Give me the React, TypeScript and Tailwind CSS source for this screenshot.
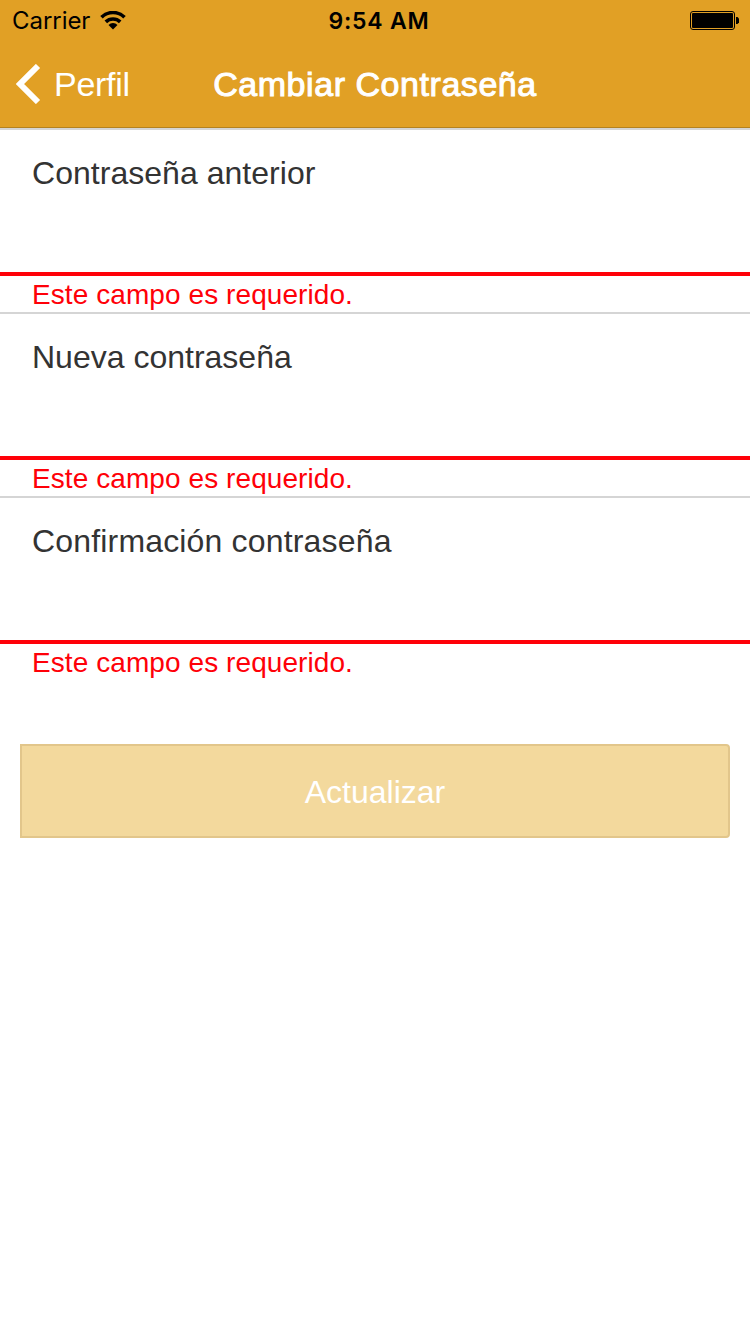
const fields = [
  { name: 'Contraseña anterior', tracking: 'tracking-[0.03px]' },
  { name: 'Nueva contraseña', tracking: 'tracking-normal' },
  { name: 'Confirmación contraseña', tracking: 'tracking-[0.17px]' },
];

export default function App() {
  return (
    <div className="flex h-[1334px] w-[750px] flex-col overflow-hidden bg-white font-['Liberation_Sans',Arial,sans-serif]">
      <header className="flex h-32 shrink-0 flex-col border-b border-[#b5821f] bg-[#e1a025] text-white">
        <div className="grid h-10 grid-cols-3 items-center pr-[11px] pl-3 font-['Inter',sans-serif] text-black">
          <div className="flex items-center gap-[10px] pt-0.5 text-[24px] leading-[38px] tracking-[-0.05px]">
            <span>Carrier</span>
            <svg className="-mt-0.5" width="26" height="19" viewBox="0 0 26 19" fill="none" stroke="currentColor" strokeWidth="3.6">
              <path d="M1.5 6.2a16.5 16.5 0 0 1 23 0" />
              <path d="M5.8 10.9a10.3 10.3 0 0 1 14.4 0" />
              <path d="M13 18.4l-4.5-4.4a6.2 6.2 0 0 1 9 0z" fill="currentColor" stroke="none" />
            </svg>
          </div>
          <div className="pt-0.5 pl-[7px] text-center text-[23px] leading-[38px] font-semibold tracking-[0.8px]">9:54 AM</div>
          <svg className="justify-self-end" width="49" height="20" viewBox="0 0 49 20">
            <rect x="0.5" y="1.5" width="44" height="18" rx="2.5" fill="none" stroke="black" />
            <rect x="2" y="3" width="41" height="15" rx="1" />
            <path d="M46 7h1.5l1.5 1.5v4L47.5 14H46z" />
          </svg>
        </div>
        <div className="grid flex-1 grid-cols-[1fr_auto_1fr] items-center">
          <div className="flex items-center gap-3 pl-4 text-[34px] tracking-[-0.3px]">
            <svg width="26" height="40" viewBox="0 0 26 40" fill="none" stroke="currentColor" strokeWidth="6">
              <path d="M22 2L4 20l18 18" />
            </svg>
            <span className="pt-0.5">Perfil</span>
          </div>
          <h1 className="pt-0.5 text-[34px] tracking-[0.55px] [-webkit-text-stroke:1px_white]">Cambiar Contraseña</h1>
          <div />
        </div>
      </header>
      <form className="flex flex-col">
        {fields.map(({ name, tracking }) => (
          <div key={name} className="flex h-[184px] flex-col border-t-2 border-[#d5d5d5]">
            <label
              className={`flex h-[146px] shrink-0 flex-col border-b-4 border-[#ff0008] pt-[23px] pl-8 text-[32px] leading-10 text-[#333] ${tracking}`}
            >
              {name}
            </label>
            <p className="pl-8 text-[28px] leading-[38px] tracking-[0.08px] text-[#ff0008]">Este campo es requerido.</p>
          </div>
        ))}
        <button className="mx-5 mt-16 h-[94px] rounded-r border-2 border-[#e2c68b] bg-[#f3d99d] pt-0.5 text-[32px] text-white">
          Actualizar
        </button>
      </form>
    </div>
  );
}
